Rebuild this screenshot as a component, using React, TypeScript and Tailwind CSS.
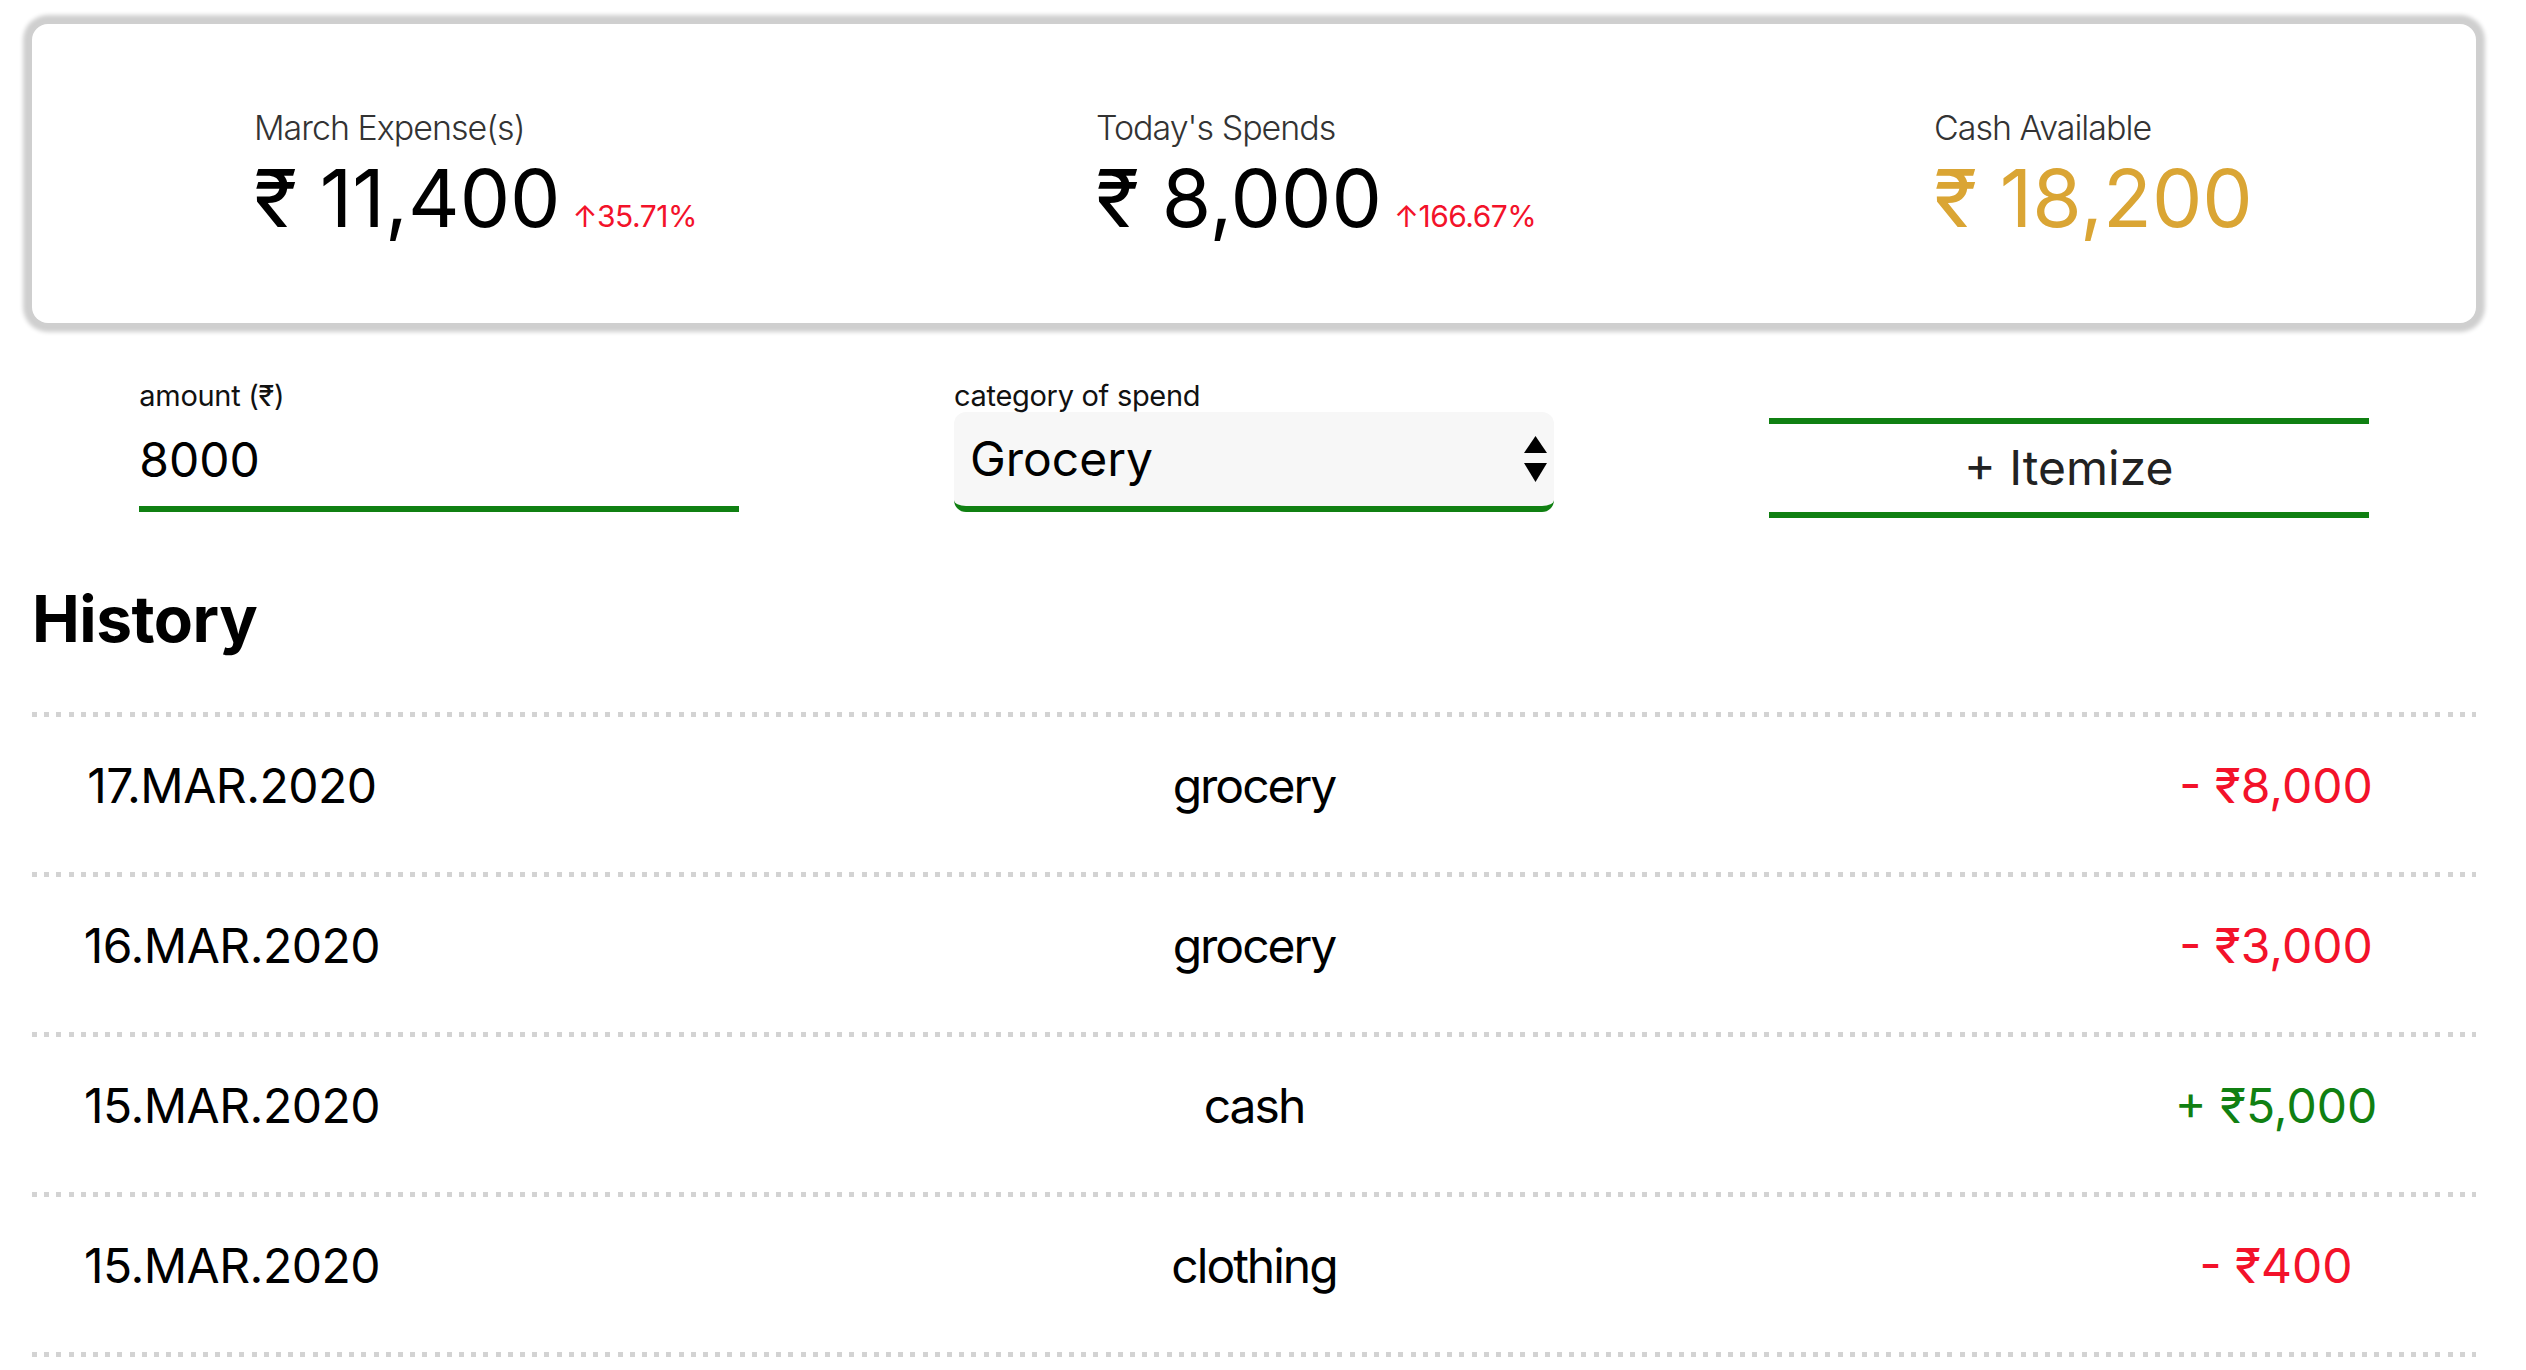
import { ReactNode } from "react";

type Entry = {
  date: string;
  category: string;
  amount: string;
  credit?: boolean;
};

const HISTORY: Entry[] = [
  { date: "17.MAR.2020", category: "grocery", amount: "- ₹8,000" },
  { date: "16.MAR.2020", category: "grocery", amount: "- ₹3,000" },
  { date: "15.MAR.2020", category: "cash", amount: "+ ₹5,000", credit: true },
  { date: "15.MAR.2020", category: "clothing", amount: "- ₹400" },
];

function Dots() {
  return (
    <div className="h-[5px] w-full bg-[image:repeating-linear-gradient(90deg,#d3d3d3_0px,#d3d3d3_5px,transparent_5px,transparent_12.2px)]" />
  );
}

function Stat({
  label,
  value,
  change,
  gold,
}: {
  label: string;
  value: string;
  change?: string;
  gold?: boolean;
}) {
  return (
    <div className="flex flex-col">
      <div className="text-[34px] leading-[40px] font-light text-[#333] tracking-[-1px]">
        {label}
      </div>
      <div className="mt-[10px] flex items-baseline">
        <span
          className={`text-[80px] leading-[80px] ${gold ? "text-[#daa534]" : "text-black"}`}
        >
          {value}
        </span>
        {change && (
          <span className="ml-[12px] text-[30px] text-[#f3122a] tracking-[-0.5px]">
            ↑{change}
          </span>
        )}
      </div>
    </div>
  );
}

function Field({ label, children }: { label?: string; children: ReactNode }) {
  return (
    <div className="flex justify-center">
      <div className="w-[600px]">
        {label && (
          <div className="text-[29px] leading-[32px] text-[#111] tracking-[-0.3px]">
            {label}
          </div>
        )}
        {children}
      </div>
    </div>
  );
}

function SelectArrows() {
  return (
    <svg width="23" height="46" viewBox="0 0 23 46" aria-hidden>
      <polygon points="11.5,0 23,17 0,17" fill="#000" />
      <polygon points="0,27 23,27 11.5,46" fill="#000" />
    </svg>
  );
}

export default function App() {
  return (
    <div className="min-h-screen bg-white pl-[32px] pr-[50px] pt-[24px] font-['Inter','Noto_Sans',sans-serif] text-black">
      {/* summary card */}
      <section className="h-[299px] rounded-[16px] bg-white shadow-[0_0_4px_9px_#cfcfcf] pt-[84px] pl-[222px] grid grid-cols-[842px_838px_auto]">
        <Stat label="March Expense(s)" value="₹ 11,400" change="35.71%" />
        <Stat label="Today's Spends" value="₹ 8,000" change="166.67%" />
        <Stat label="Cash Available" value="₹ 18,200" gold />
      </section>

      {/* entry form */}
      <div className="mt-[57px] grid grid-cols-3">
        <Field label="amount (₹)">
          <input
            defaultValue="8000"
            className="block w-full h-[100px] bg-transparent border-b-[6px] border-[#108012] outline-none text-[48px] p-0"
          />
        </Field>
        <Field label="category of spend">
          <div className="h-[100px] flex items-center justify-between bg-[#f7f7f7] rounded-[12px] border-b-[6px] border-[#108012] pl-[16px] pr-[7px]">
            <span className="text-[48px]">Grocery</span>
            <SelectArrows />
          </div>
        </Field>
        <Field>
          <button className="mt-[38px] w-full h-[100px] border-y-[6px] border-[#108012] text-[48px] text-[#222]">
            + Itemize
          </button>
        </Field>
      </div>

      <h2 className="mt-[63px] text-[64px] leading-[76px] font-bold tracking-[-0.5px]">
        History
      </h2>

      <div className="mt-[55px]">
        {HISTORY.map((e, i) => (
          <div key={i}>
            <Dots />
            <div className="h-[155px] pt-[41px] grid grid-cols-[400px_1fr_400px] text-center text-[48px] leading-[56px]">
              <span className="tracking-[-0.5px]">{e.date}</span>
              <span className="tracking-[-2px]">{e.category}</span>
              <span className={e.credit ? "text-[#108012]" : "text-[#f3122a]"}>
                {e.amount}
              </span>
            </div>
          </div>
        ))}
        <Dots />
      </div>
    </div>
  );
}
